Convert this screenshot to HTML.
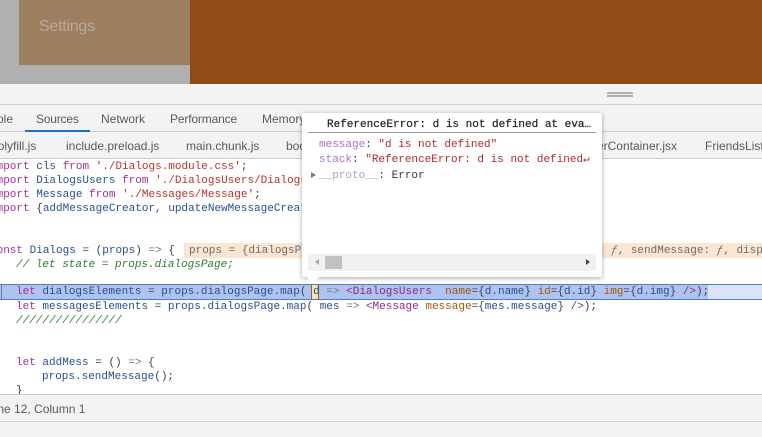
<!DOCTYPE html>
<html><head><meta charset="utf-8"><style>
html,body{margin:0;padding:0;background:#fff}
#r{position:relative;width:762px;height:437px;overflow:hidden;background:#fff;font-family:"Liberation Sans",sans-serif}
#r div,#r span.a{position:absolute}
.u{font-size:12px;color:#5a5a5a;white-space:nowrap;line-height:16px}
.c{position:absolute;left:0;height:14px;font:11px/14px "Liberation Mono",monospace;white-space:pre;color:#3a424a}
.k{color:#a0309a}.v{color:#2a4f8c}.s{color:#b8322c}.o{color:#777}.g{color:#2f7a30;font-style:italic}.t{color:#8a2a88}.n{color:#9a5a10}
.p{position:absolute;left:319px;font:11px/14px "Liberation Mono",monospace;white-space:pre;color:#303942}
</style></head><body><div id="r">
<div style="left:0;top:0;width:190px;height:84px;background:#b0b0b0"></div>
<div style="left:19px;top:0;width:171px;height:65px;background:#9b7f5f"></div>
<div style="left:39px;top:17px;font-size:16px;line-height:20px;color:#b8aa98;letter-spacing:-.25px">Settings</div>
<div style="left:190px;top:0;width:572px;height:84px;background:#8f4a16"></div>

<div style="left:0;top:84px;width:762px;height:75px;background:#f3f3f3"></div>
<div style="left:0;top:104px;width:762px;height:1px;background:#d0d0d0"></div>
<div style="left:607px;top:92px;width:26px;height:2px;background:#b0b0b0"></div>
<div style="left:607px;top:95px;width:26px;height:2px;background:#b0b0b0"></div>
<div style="left:0;top:131px;width:762px;height:1px;background:#ccc"></div>
<div style="left:25px;top:130px;width:65px;height:2px;background:#1a73c8"></div>
<div class="u" style="left:-33px;top:111px;width:46px;text-align:right">Console</div>
<div class="u" style="left:36px;top:111px;letter-spacing:-.2px">Sources</div>
<div class="u" style="left:101px;top:111px">Network</div>
<div class="u" style="left:170px;top:111px;letter-spacing:-.15px">Performance</div>
<div class="u" style="left:262px;top:111px">Memory</div>
<div style="left:0;top:158px;width:762px;height:1px;background:#ccc"></div>
<div class="u" style="left:-9px;top:138px">polyfill.js</div>
<div class="u" style="left:66px;top:138px">include.preload.js</div>
<div class="u" style="left:186px;top:138px">main.chunk.js</div>
<div class="u" style="left:286px;top:138px">bootstrap</div>
<div class="u" style="left:560px;top:138px;width:117px;text-align:right">erContainer.jsx</div>
<div class="u" style="left:705px;top:138px">FriendsList</div>

<span class="c" style="top:160px;left:-10px"><span class="k">import</span> <span class="v">cls</span> <span class="k">from</span> <span class="s">'./Dialogs.module.css'</span>;</span>
<span class="c" style="top:174px;left:-10px"><span class="k">import</span> <span class="v">DialogsUsers</span> <span class="k">from</span> <span class="s">'./DialogsUsers/Dialogs'</span>;</span>
<span class="c" style="top:188px;left:-10px"><span class="k">import</span> <span class="v">Message</span> <span class="k">from</span> <span class="s">'./Messages/Message'</span>;</span>
<span class="c" style="top:202px;left:-10px"><span class="k">import</span> {<span class="v">addMessageCreator, updateNewMessageCreator</span>}</span>
<div style="left:184px;top:243px;width:578px;height:15px;background:#fbe6d3"></div>
<span class="c" style="top:244px;left:-10px"><span class="k">const</span> <span class="v">Dialogs</span> = (<span class="v">props</span>) <span class="o">=&gt;</span> {</span>
<span class="c" style="top:244px;left:189px;color:#6c6c6c">props = {dialogsPage: {…},</span>
<span class="c" style="top:244px;left:611px;color:#6c6c6c"><i>ƒ</i>, sendMessage: <i>ƒ</i>, dispatch: <i>ƒ</i>}</span>
<span class="c g" style="top:258px;left:16px">// let state = props.dialogsPage;</span>

<div style="left:0;top:284px;width:762px;height:14px;background:#dbe4f9;border-top:1px solid #4a7fc4;border-bottom:1px solid #4a7fc4"></div>
<div style="left:0;top:285px;width:708px;height:14px;background:#b0c3f0"></div>
<div style="left:311px;top:285px;width:8px;height:14px;background:#f9dfb0;border-left:1px solid #a85a10;border-right:1px solid #a85a10;box-sizing:border-box"></div>
<div style="left:1px;top:285px;width:1px;height:14px;background:#4a7fc4"></div>
<span class="c" style="top:285px;left:16px"><span class="k">let</span> <span class="v">dialogsElements</span> = <span class="v">props.dialogsPage.map</span>( <span class="v">d</span> <span class="o">=&gt;</span> <span class="t">&lt;DialogsUsers</span>  <span class="n">name</span>={<span class="v">d.name</span>} <span class="n">id</span>={<span class="v">d.id</span>} <span class="n">img</span>={<span class="v">d.img</span>} <span class="t">/&gt;</span>);</span>
<span class="c" style="top:300px;left:16px"><span class="k">let</span> <span class="v">messagesElements</span> = <span class="v">props.dialogsPage.map</span>( <span class="v">mes</span> <span class="o">=&gt;</span> <span class="t">&lt;Message</span> <span class="n">message</span>={<span class="v">mes.message</span>} <span class="t">/&gt;</span>);</span>
<span class="c g" style="top:314px;left:16px">////////////////</span>
<span class="c" style="top:356px;left:16px"><span class="k">let</span> <span class="v">addMess</span> = () <span class="o">=&gt;</span> {</span>
<span class="c" style="top:370px;left:42px"><span class="v">props.sendMessage</span>();</span>
<span class="c" style="top:384px;left:16px">}</span>

<div style="left:0;top:394px;width:762px;height:43px;background:#f3f3f3"></div>
<div style="left:0;top:394px;width:762px;height:1px;background:#ccc"></div>
<div style="left:0;top:421px;width:762px;height:1px;background:#d0d0d0"></div>
<div class="u" style="left:-12px;top:401px">Line 12, Column 1</div>

<div style="left:302px;top:113px;width:300px;height:164px;background:#fff;border-radius:2px;box-shadow:0 1px 5px rgba(0,0,0,.35)"></div>
<div style="left:307px;top:277px;width:0;height:0;border-left:6px solid transparent;border-right:6px solid transparent;border-top:7px solid #fff"></div>
<span class="p" style="left:327px;top:118px;color:#222;-webkit-text-stroke:.2px #222">ReferenceError: d is not defined at eva…</span>
<div style="left:308px;top:132px;width:288px;height:1px;background:#999"></div>
<span class="p" style="top:138px"><span style="color:#a971c4">message</span>: <span style="color:#b02a2a">"d is not defined"</span></span>
<span class="p" style="top:153px"><span style="color:#a971c4">stack</span>: <span style="color:#b02a2a">"ReferenceError: d is not defined↵</span></span>
<span class="p" style="top:169px"><span style="color:#b79ac8">__proto__</span>: Error</span>
<div style="left:311px;top:172px;width:0;height:0;border-left:5px solid #777;border-top:3.5px solid transparent;border-bottom:3.5px solid transparent"></div>
<div style="left:308px;top:254px;width:288px;height:17px;background:#f1f1f1"></div>
<div style="left:325px;top:256px;width:17px;height:13px;background:#c1c1c1"></div>
<div style="left:315px;top:259px;width:0;height:0;border-right:4px solid #a3a3a3;border-top:3.5px solid transparent;border-bottom:3.5px solid transparent"></div>
<div style="left:586px;top:259px;width:0;height:0;border-left:4px solid #444;border-top:3.5px solid transparent;border-bottom:3.5px solid transparent"></div>
</div></body></html>
